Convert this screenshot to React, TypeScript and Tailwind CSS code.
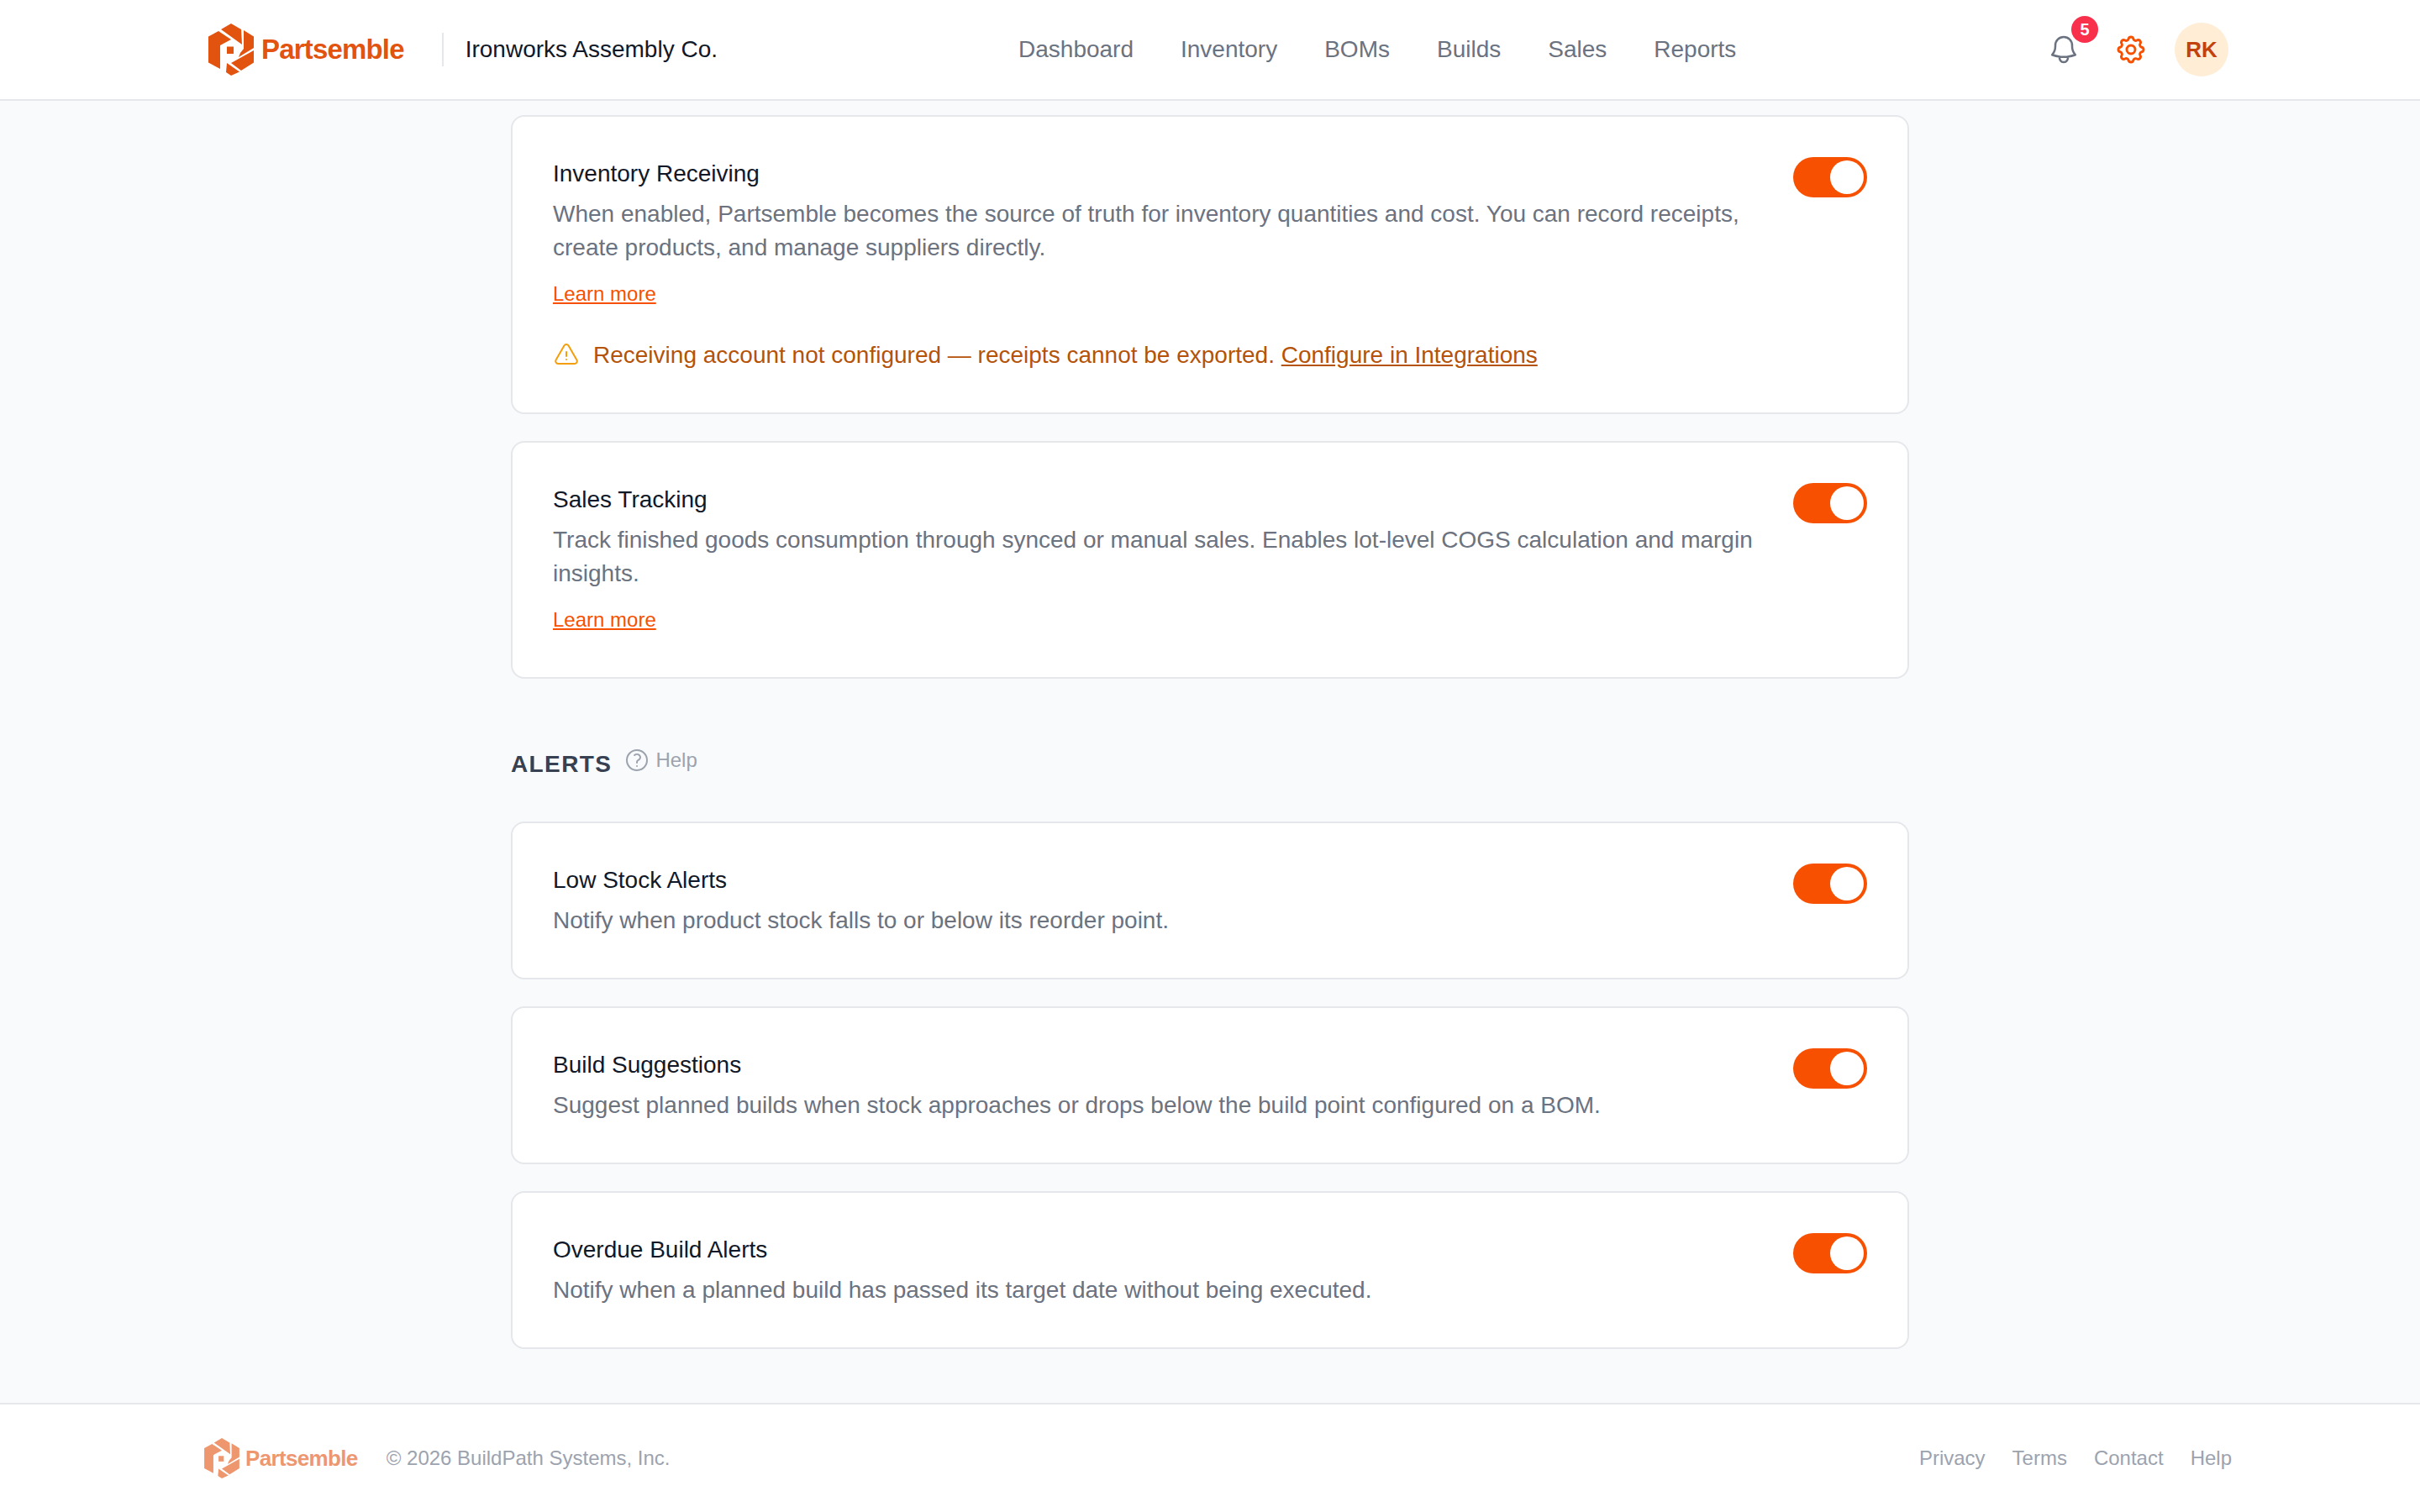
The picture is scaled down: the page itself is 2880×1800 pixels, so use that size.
import { HiOutlineBell, HiOutlineExclamationTriangle, HiOutlineQuestionMarkCircle } from "react-icons/hi2";
import { HiOutlineCog } from "react-icons/hi";

const NAV = ["Dashboard", "Inventory", "BOMs", "Builds", "Sales", "Reports"];

function Logo({ className }: { className: string }) {
  return (
    <svg viewBox="0 0 54 62" className={className} fill="#e35310">
      <polygon points="15,7 27,0 39,7 40,25" />
      <polygon points="42,8 54,15.5 54,29 36,40 38,35 42,30" />
      <polygon points="54,32 54,46.5 39,56 27,47" />
      <polygon points="22,47 37,57.5 27,62 21,58" />
      <polygon points="0,15.5 12,9 27,19 14,26 14,54 0,46.5" />
      <rect x="22" y="27.5" width="8" height="8.5" />
    </svg>
  );
}

function Toggle() {
  return (
    <div className="flex h-12 w-[88px] shrink-0 items-center justify-end rounded-full bg-[#f75000] pr-1">
      <div className="h-10 w-10 rounded-full bg-white" />
    </div>
  );
}

function Card({ title, desc, learn, children }: { title: string; desc: string; learn?: boolean; children?: React.ReactNode }) {
  return (
    <div className="rounded-2xl border-2 border-[#e5e7eb] bg-white p-12">
      <div className="flex items-start justify-between gap-12">
        <div>
          <h3 className="mb-2 text-[28px] leading-10 text-[#111827]">{title}</h3>
          <p className="text-[28px] leading-10 text-[#6b7280]">{desc}</p>
          {learn && (
            <a className="mt-[15px] block text-[24px] leading-10 text-[#f75000] underline">Learn more</a>
          )}
        </div>
        <Toggle />
      </div>
      {children}
    </div>
  );
}

export default function App() {
  return (
    <div className="flex h-[1800px] flex-col overflow-hidden bg-[#f9fafb] font-['Liberation_Sans',sans-serif]">
      <header className="flex h-[120px] shrink-0 items-center border-b-2 border-[#e5e7eb] bg-white pl-[248px] pr-[228px]">
        <Logo className="h-[62px] w-[54px]" />
        <span className="ml-[9px] text-[33px] font-bold tracking-tight text-[#e35310]">Partsemble</span>
        <div className="ml-[45px] h-10 w-0.5 bg-[#e5e7eb]" />
        <span className="ml-[26px] text-[28px] text-[#111827]">Ironworks Assembly Co.</span>
        <nav className="ml-[358px] flex gap-14 text-[28px] text-[#6b7280]">
          {NAV.map((n) => (
            <a key={n}>{n}</a>
          ))}
        </nav>
        <div className="ml-auto flex items-center">
          <div className="relative">
            <HiOutlineBell size={40} className="text-[#6b7280]" />
            <span className="absolute -right-[21px] -top-5 flex h-8 w-8 items-center justify-center rounded-full bg-[#f9304b] text-[20px] font-bold text-white">
              5
            </span>
          </div>
          <HiOutlineCog size={40} strokeWidth={1.75} className="ml-10 text-[#f75000]" />
          <div className="ml-8 flex h-16 w-16 items-center justify-center rounded-full bg-[#ffedd5] text-[26px] font-bold text-[#c2410c]">
            RK
          </div>
        </div>
      </header>

      <main className="flex flex-1 flex-col overflow-hidden px-[608px] pt-[17px]">
        <Card
          title="Inventory Receiving"
          desc="When enabled, Partsemble becomes the source of truth for inventory quantities and cost. You can record receipts, create products, and manage suppliers directly."
          learn
        >
          <div className="mt-[33px] flex items-center text-[28px] leading-10 text-[#b45309]">
            <HiOutlineExclamationTriangle size={32} className="text-[#f59e0b]" />
            <span className="ml-4">
              Receiving account not configured — receipts cannot be exported.{" "}
              <a className="underline">Configure in Integrations</a>
            </span>
          </div>
        </Card>
        <div className="mt-8">
          <Card
            title="Sales Tracking"
            desc="Track finished goods consumption through synced or manual sales. Enables lot-level COGS calculation and margin insights."
            learn
          />
        </div>
        <div className="mb-[45px] mt-[79px] flex items-center">
          <h2 className="text-[28px] font-bold leading-10 tracking-wider text-[#374151]">ALERTS</h2>
          <div className="mb-2.5 ml-3.5 flex items-center">
            <HiOutlineQuestionMarkCircle size={32} className="text-[#9ca3af]" />
            <span className="ml-1.5 text-[24px] text-[#9ca3af]">Help</span>
          </div>
        </div>
        <div className="flex flex-col gap-8">
          <Card title="Low Stock Alerts" desc="Notify when product stock falls to or below its reorder point." />
          <Card title="Build Suggestions" desc="Suggest planned builds when stock approaches or drops below the build point configured on a BOM." />
          <Card title="Overdue Build Alerts" desc="Notify when a planned build has passed its target date without being executed." />
        </div>
      </main>

      <footer className="flex h-[130px] shrink-0 items-center border-t-2 border-[#e5e7eb] bg-white pl-[243px] pr-[224px] text-[24px] text-[#9ca3af]">
        <div className="flex items-center opacity-60">
          <Logo className="h-[48px] w-[42px]" />
          <span className="ml-[7px] text-[26px] font-bold tracking-tight text-[#e35310]">Partsemble</span>
        </div>
        <span className="ml-[34px]">© 2026 BuildPath Systems, Inc.</span>
        <div className="ml-auto flex gap-8">
          <a>Privacy</a>
          <a>Terms</a>
          <a>Contact</a>
          <a>Help</a>
        </div>
      </footer>
    </div>
  );
}
